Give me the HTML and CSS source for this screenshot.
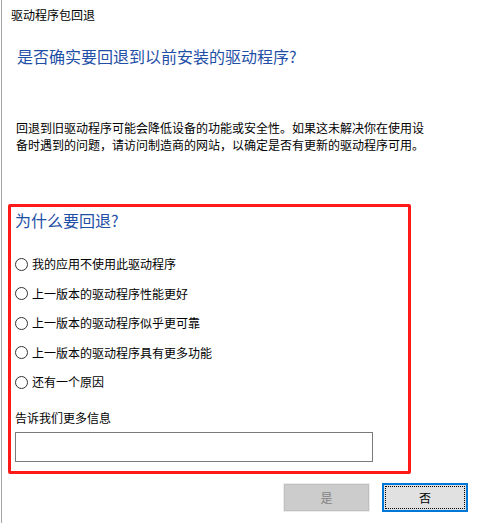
FILE: index.html
```html
<!DOCTYPE html>
<html lang="zh-CN">
<head>
<meta charset="utf-8">
<title>驱动程序包回退</title>
<link rel="stylesheet" href="styles.css">
</head>
<body>
<div class="dialog">
  <div class="title">驱动程序包回退</div>
  <h1 class="main-instruction">是否确实要回退到以前安装的驱动程序?</h1>
  <p class="desc">回退到旧驱动程序可能会降低设备的功能或安全性。如果这未解决你在使用设备时遇到的问题，请访问制造商的网站，以确定是否有更新的驱动程序可用。</p>
  <div class="reason-box">
    <h2 class="reason-title">为什么要回退?</h2>
    <div class="options">
      <label class="option"><span class="radio"></span><span>我的应用不使用此驱动程序</span></label>
      <label class="option"><span class="radio"></span><span>上一版本的驱动程序性能更好</span></label>
      <label class="option"><span class="radio"></span><span>上一版本的驱动程序似乎更可靠</span></label>
      <label class="option"><span class="radio"></span><span>上一版本的驱动程序具有更多功能</span></label>
      <label class="option"><span class="radio"></span><span>还有一个原因</span></label>
    </div>
    <div class="more-label">告诉我们更多信息</div>
    <input class="more-input" type="text">
  </div>
  <div class="buttons">
    <button class="btn btn-disabled" disabled>是</button>
    <button class="btn btn-default">否</button>
  </div>
</div>
</body>
</html>
```

FILE: styles.css
```css
html, body {
  margin: 0;
  padding: 0;
  background: #ffffff;
}
body {
  font-family: "Noto Sans CJK SC", "Noto Sans", sans-serif;
  font-size: 12px;
  color: #000000;
}
.dialog {
  margin-left: 1px;
  border-left: 1px solid #a3a3a3;
  height: 523px;
  box-sizing: border-box;
  overflow: hidden;
}
.title {
  margin: 7px 0 0 9px;
  line-height: 16px;
  font-size: 12px;
}
.main-instruction {
  margin: 22px 0 0 15px;
  font-size: 16px;
  line-height: 22px;
  font-weight: normal;
  color: #1f50a6;
}
.desc {
  margin: 52px 0 0 14px;
  width: 414px;
  line-height: 17px;
  font-size: 12px;
}
.reason-box {
  margin: 51px 0 0 6px;
  width: 403px;
  box-sizing: border-box;
  border: 3px solid #ff1a1a;
  border-radius: 2px;
  padding: 2px 0 9px 4px;
}
.reason-title {
  margin: 0;
  font-size: 16px;
  line-height: 22px;
  font-weight: normal;
  color: #1f50a6;
}
.options {
  margin-top: 25px;
  display: flex;
  flex-direction: column;
  gap: 13.5px;
}
.option {
  display: flex;
  align-items: center;
  gap: 4px;
  line-height: 16px;
  height: 16px;
}
.radio {
  width: 13px;
  height: 13px;
  box-sizing: border-box;
  border: 1px solid #333333;
  border-radius: 50%;
  background: #ffffff;
  flex: none;
}
.more-label {
  margin-top: 19.5px;
  line-height: 16px;
}
.more-input {
  display: block;
  margin: 6.5px 0 0 0;
  width: 358px;
  height: 30px;
  box-sizing: border-box;
  border: 1px solid #7a7a7a;
  padding: 0 4px;
  font-family: inherit;
  font-size: 12px;
  outline: none;
}
.buttons {
  display: flex;
  justify-content: flex-end;
  align-items: flex-start;
  gap: 12px;
  padding-right: 9px;
  margin-top: 9px;
}
.btn {
  font-family: inherit;
  font-size: 12px;
  padding: 0;
  box-sizing: border-box;
}
.btn-disabled {
  width: 85px;
  height: 27px;
  margin: 1px;
  background: #cccccc;
  border: 1px solid #bfbfbf;
  box-shadow: 0 0 0 1px #ececec;
  color: #838383;
}
.btn-default {
  width: 86px;
  height: 29px;
  background: #e1e1e1;
  border: 2px solid #0078d7;
  outline: 1px dotted #000000;
  outline-offset: -4px;
  color: #000000;
}
```
